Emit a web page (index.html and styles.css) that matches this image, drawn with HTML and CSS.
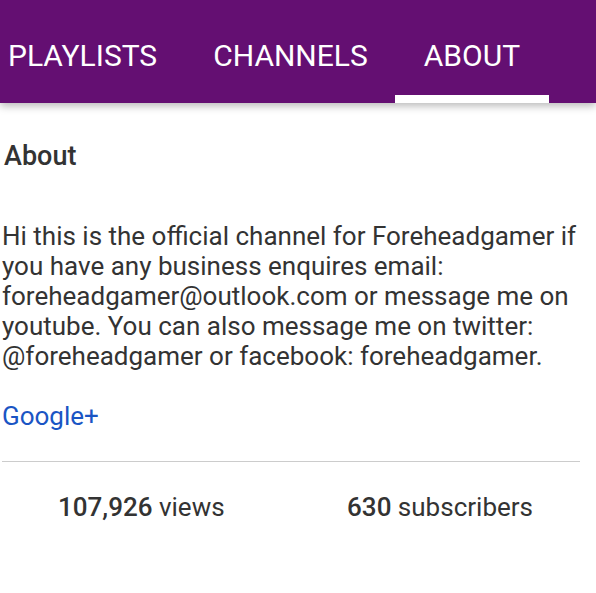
FILE: index.html
```html
<!DOCTYPE html>
<html>
<head>
<meta charset="utf-8">
<link rel="stylesheet" href="styles.css">
</head>
<body>
<header class="tabs">
  <div class="tab">PLAYLISTS</div>
  <div class="tab">CHANNELS</div>
  <div class="tab active">ABOUT</div>
</header>
<main class="content">
  <h2 class="title">About</h2>
  <p class="desc">Hi this is the official channel for Foreheadgamer if<br>you have any business enquires email:<br>foreheadgamer@outlook.com or message me on<br>youtube. You can also message me on twitter:<br>@foreheadgamer or facebook: foreheadgamer.</p>
  <a class="link" href="#">Google+</a>
  <div class="stats">
    <div class="stat"><b>107,926</b> views</div>
    <div class="stat"><b>630</b> subscribers</div>
  </div>
</main>
</body>
</html>
```
FILE: styles.css
```css
* { box-sizing: border-box; }
html, body { margin: 0; padding: 0; background: #fff; }
body {
  font-family: Roboto, "Liberation Sans", sans-serif;
  width: 596px;
  height: 593px;
  overflow: hidden;
}
.tabs {
  height: 103px;
  background: #640f72;
  display: flex;
  align-items: stretch;
  padding-left: 8px;
  box-shadow: 0 3px 8px rgba(0,0,0,0.28);
  position: relative;
}
.tab {
  color: #fff;
  font-size: 30px;
  display: flex;
  align-items: center;
  padding-top: 7px;
  margin-right: 56px;
}
.tab.active {
  position: relative;
}
.tab.active::after {
  content: "";
  position: absolute;
  left: -29px;
  right: -29px;
  bottom: 0;
  height: 8px;
  background: #fff;
}
.content {
  padding: 0 16px 0 2px;
}
.title {
  margin: 0;
  padding: 38px 0 0 2px;
  font-size: 27px;
  font-weight: 500;
  color: #333;
  line-height: 30px;
}
.desc {
  margin: 0;
  padding-top: 50px;
  font-size: 26px;
  line-height: 30px;
  color: #333;
}
.link {
  display: block;
  margin-top: 30px;
  font-size: 26px;
  line-height: 30px;
  color: #1a55c4;
  text-decoration: none;
}
.stats {
  margin-top: 30px;
  border-top: 1px solid #cccccc;
  display: flex;
  justify-content: space-between;
  padding: 30px 47px 0 56px;
}
.stat {
  font-size: 26px;
  line-height: 30px;
  color: #333;
}
.stat b { font-weight: 500; }
```
